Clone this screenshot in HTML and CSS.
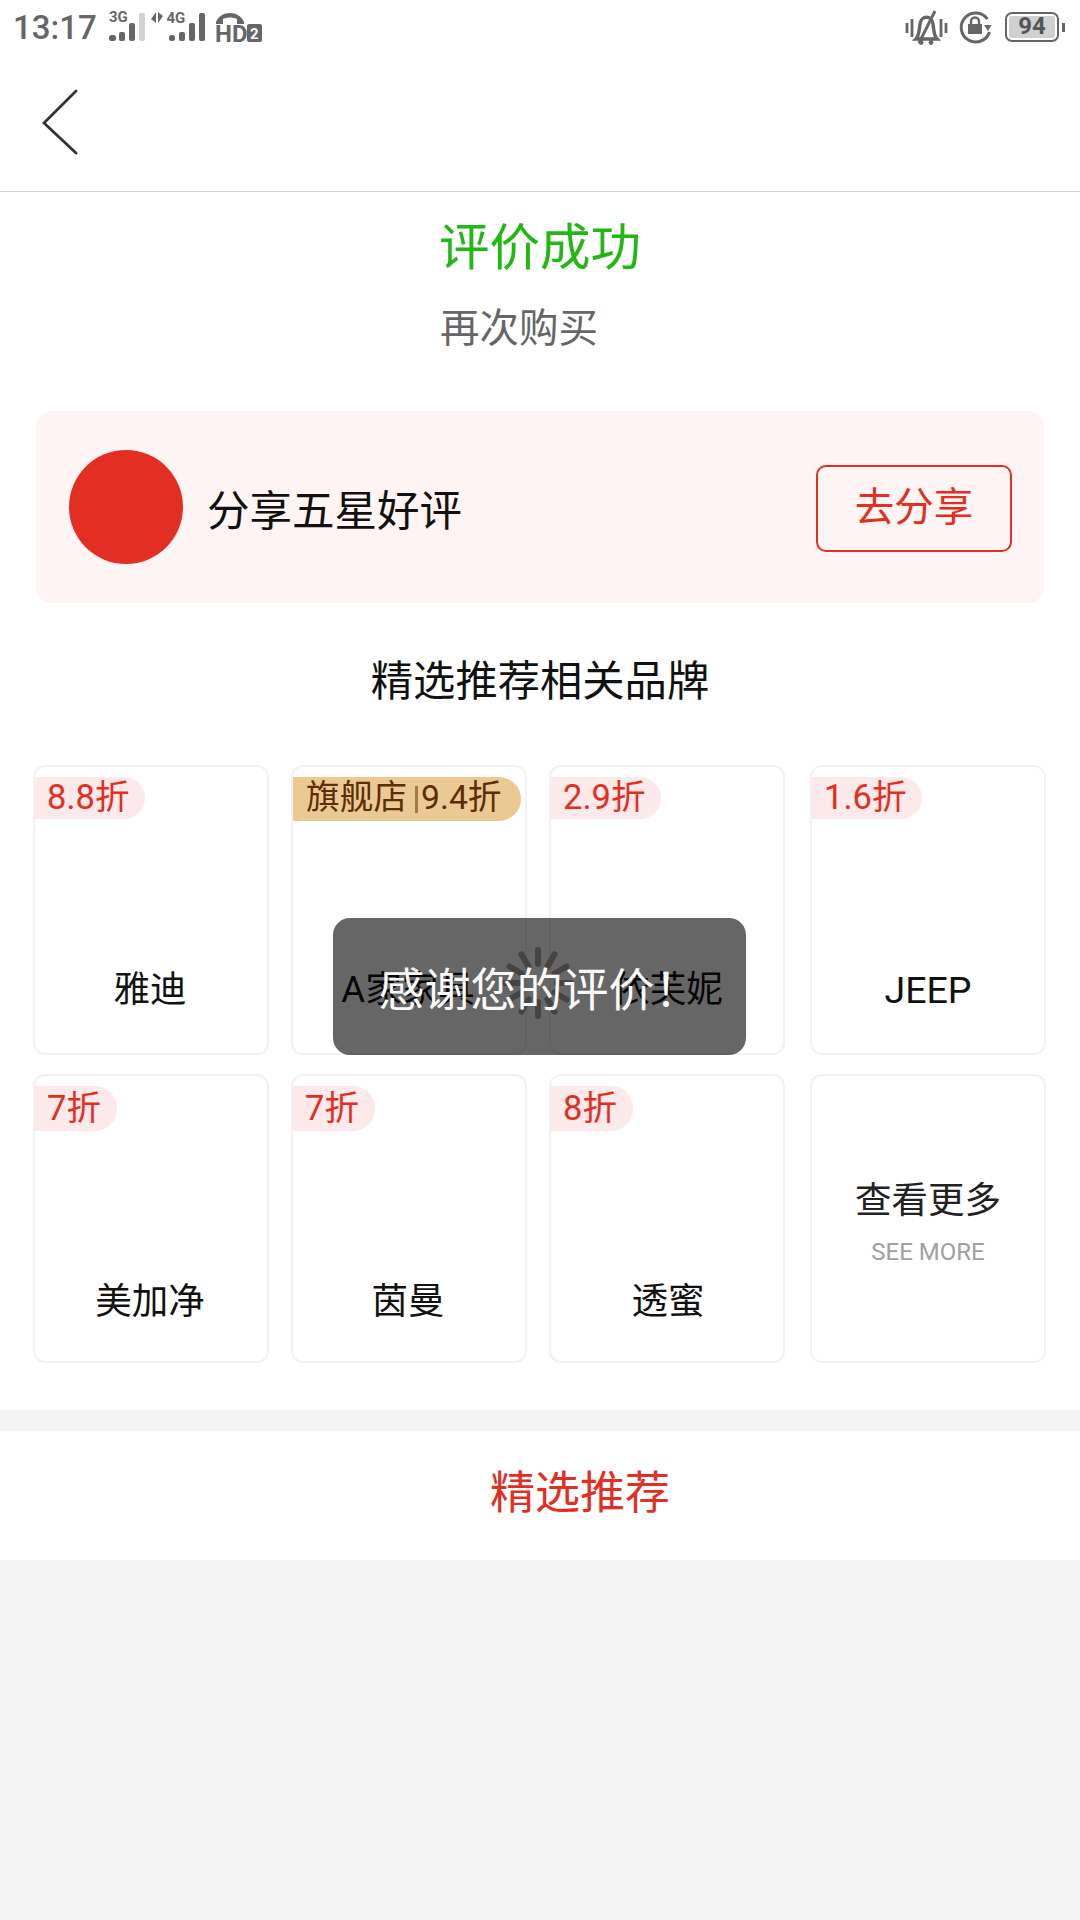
FILE: index.html
```html
<!DOCTYPE html>
<html lang="zh">
<head>
<meta charset="utf-8">
<title>评价成功</title>
<link rel="stylesheet" href="styles.css">
</head>
<body>
<div class="page">
  <div class="status">
    <div class="status-left">
      <span class="time">13:17</span>
      <svg class="ic ic-3g" width="37" height="30" viewBox="0 0 37 30"><text x="0" y="10" class="sig-t">3G</text><rect x="0" y="23" width="7" height="6" rx="2.500" fill="#666"/><rect x="10" y="20" width="6" height="9" rx="2" fill="#666"/><rect x="20" y="11" width="6" height="18" rx="2" fill="#666"/><rect x="30" y="1" width="6" height="28" rx="2" fill="#d2d2d2"/></svg>
      <svg class="ic ic-4g" width="56" height="30" viewBox="0 0 56 30"><path d="M6 0v11L1 7zM8 11V0l5 4z" fill="#666"/><text x="16.500" y="11" class="sig-t">4G</text><rect x="19" y="23" width="6" height="6" rx="2.500" fill="#666"/><rect x="29" y="20" width="6" height="9" rx="2" fill="#666"/><rect x="39" y="11" width="6" height="18" rx="2" fill="#666"/><rect x="49" y="1" width="6" height="28" rx="2" fill="#666"/></svg>
      <svg class="ic ic-hd" width="48" height="31" viewBox="0 0 48 31"><path d="M1 10C6 -2 24 -2 29 10v2h-7V7C17 5 13 5 8 7v5H1z" fill="#666"/><text x="0" y="30" class="hd-t">HD</text><rect x="32" y="12" width="15" height="18" rx="2" fill="#666"/><text x="35" y="27" class="hd-n">2</text></svg>
    </div>
    <div class="status-right">
      <svg class="ic" width="45" height="36" viewBox="0 0 45 36"><g fill="none" stroke="#666" stroke-width="2.800"><path d="M4 14v10M9 10v18M38 10v18M43 14v10"/><path d="M13 30c3-3 3-7 4-15c1-9 12-9 13 0c1 8 1 12 4 15z" stroke-width="3.400"/><path d="M16 34L32 2" stroke-width="3"/></g><circle cx="18" cy="33.500" r="2.400" fill="#666"/><circle cx="28" cy="33.500" r="2.400" fill="#666"/></svg>
      <svg class="ic" width="33" height="33" viewBox="0 0 33 33"><path d="M30.500 21A14.500 14.500 0 1 1 28.500 8" fill="none" stroke="#666" stroke-width="3"/><path d="M25 14l7.500 0-3.500 6z" fill="#666"/><rect x="9" y="13" width="14" height="10" fill="#666"/><path d="M12 13v-2.500a4 4 0 0 1 8 0v2.500" fill="none" stroke="#666" stroke-width="2.400"/></svg>
      <div class="battery"><div class="battery-body"><div class="battery-fill">94</div></div><div class="battery-cap"></div></div>
    </div>
  </div>
  <header class="nav">
    <svg width="44" height="70" viewBox="0 0 44 70"><path d="M34 3L2 35l32 30" fill="none" stroke="#333" stroke-width="2.800" stroke-linecap="round"/></svg>
  </header>
  <main class="content">
    <h1 class="title">评价成功</h1>
    <div class="rebuy">再次购买</div>
    <section class="share">
      <div class="share-dot"></div>
      <div class="share-text">分享五星好评</div>
      <div class="share-btn">去分享</div>
    </section>
    <h2 class="sub">精选推荐相关品牌</h2>
    <section class="grid">
      <div class="card"><span class="tag">8.8折</span><span class="name">雅迪</span></div>
      <div class="card"><span class="tag gold">旗舰店<i class="sep"></i>9.4折</span><span class="name">A家家具</span></div>
      <div class="card"><span class="tag">2.9折</span><span class="name">依芙妮</span></div>
      <div class="card"><span class="tag">1.6折</span><span class="name name-latin">JEEP</span></div>
      <div class="card"><span class="tag tall">7折</span><span class="name">美加净</span></div>
      <div class="card"><span class="tag tall">7折</span><span class="name">茵曼</span></div>
      <div class="card"><span class="tag tall">8折</span><span class="name">透蜜</span></div>
      <div class="card more"><span class="more-t">查看更多</span><span class="more-s">SEE MORE</span></div>
    </section>
    <div class="band"></div>
    <div class="picks"><span>精选推荐</span></div>
  </main>
  <div class="toast">
    <svg class="spin" width="72" height="72" viewBox="-36 -36 72 72"><g stroke="#444" stroke-width="6" stroke-linecap="round"><path d="M0 -33V-19"/><path d="M0 -33V-19" transform="rotate(30)"/><path d="M0 -33V-19" transform="rotate(60)"/><path d="M0 -33V-19" transform="rotate(90)"/><path d="M0 -33V-19" transform="rotate(120)"/><path d="M0 -33V-19" transform="rotate(150)"/><path d="M0 -33V-19" transform="rotate(180)"/><path d="M0 -33V-19" transform="rotate(210)"/><path d="M0 -33V-19" transform="rotate(240)"/><path d="M0 -33V-19" transform="rotate(270)"/><path d="M0 -33V-19" transform="rotate(300)"/><path d="M0 -33V-19" transform="rotate(330)"/></g></svg>
    <span class="toast-t">感谢您的评价！</span>
  </div>
</div>
</body>
</html>
```
FILE: styles.css
```css
* { box-sizing: border-box; }
html, body { margin: 0; padding: 0; }
body { width: 1080px; height: 1920px; overflow: hidden; background: #f3f3f3; font-family: "Roboto", "Noto Sans CJK SC", sans-serif; }
.page { position: relative; width: 1080px; height: 1920px; }
.status { height: 54px; background: #fff; display: flex; justify-content: space-between; align-items: center; padding: 0 15px 0 13px; }
.status-left, .status-right { display: flex; align-items: center; }
.time { flex: none; font-size: 33px; font-weight: 500; color: #666; white-space: nowrap; }
.ic { display: block; flex: none; overflow: visible; }
.ic-3g { margin-left: 12px; }
.ic-4g { margin-left: 4px; }
.ic-hd { margin-left: 9px; }
.sig-t { font: 700 15px "Roboto", sans-serif; fill: #666; }
.hd-t { font: 700 24px "Roboto", sans-serif; fill: #666; }
.hd-n { font: 700 15px "Roboto", sans-serif; fill: #fff; }
.status-right { gap: 11px; }
.battery { display: flex; align-items: center; gap: 3px; margin-left: 2px; }
.battery-body { width: 54px; height: 30px; border: 2.500px solid #666; border-radius: 7px; padding: 2px; }
.battery-fill { height: 100%; background: #d0d0d0; border-radius: 2px; font: 700 24px/21px "Roboto", sans-serif; color: #555; text-align: center; }
.battery-cap { width: 3px; height: 9px; background: #666; }
.nav { height: 138px; background: #fff; border-bottom: 1px solid #d4d4d4; display: flex; align-items: center; padding: 0 0 0 42px; }
.content { background: #fff; }
.title { margin: 0; padding-top: 20px; height: 92px; font-size: 50.500px; line-height: 72px; font-weight: 400; color: #22b812; text-align: center; }
.rebuy { height: 127px; padding: 17px 0 0 440px; font-size: 39.500px; line-height: 56px; color: #666; }
.share { width: 1008px; height: 192px; margin: 0 auto; background: #fdf4f3; border-radius: 16px; display: flex; align-items: center; padding: 0 32px 0 33px; }
.share-dot { width: 114px; height: 114px; border-radius: 50%; background: #e32e24; }
.share-text { flex: 1; margin-left: 24px; font-size: 42.500px; color: #111; }
.share-btn { width: 196px; height: 87px; margin-top: 3px; border: 2px solid #e32e24; border-radius: 10px; color: #e32e24; font-size: 39.500px; line-height: 81px; text-align: center; }
.sub { margin: 0; height: 162px; padding-top: 49px; font-size: 42.300px; line-height: 60px; font-weight: 400; color: #111; text-align: center; }
.grid { display: grid; grid-template-columns: 236px 236px 236px 239px; grid-template-rows: 290px 289px; column-gap: 22px; row-gap: 19px; padding-left: 33px; }
.card { position: relative; border: 2px solid #f2f2f2; border-radius: 12px; display: flex; flex-direction: column; align-items: center; justify-content: flex-end; padding: 0 2px 38px 0; }
.card:nth-child(3), .card:nth-child(7) { padding-right: 0; padding-left: 2px; }
.card:nth-child(4n) { width: 236px; justify-self: end; padding-right: 0; }
.card:nth-child(n+5) { padding-bottom: 34px; }
.tag { position: absolute; left: 0; top: 10px; height: 42px; padding: 0 16px 0 12px; background: #fce9e9; border-radius: 0 21px 21px 0; color: #e32e24; font-size: 34.500px; line-height: 40px; white-space: nowrap; }
.tag.tall { height: 45px; border-radius: 0 22px 22px 0; line-height: 44px; }
.tag.gold { height: 44px; border-radius: 0 22px 22px 0; background: #eaca92; color: #5e2d08; font-size: 33.700px; line-height: 42px; padding: 0 19px 0 13px; }
.sep { display: inline-block; width: 3px; height: 27px; background: #a57a4a; margin: 0 3px 0 8px; vertical-align: -4px; }
.name { font-size: 36.500px; line-height: 50px; color: #111; }
.name-latin { font-size: 37.500px; }
.card.more { justify-content: center; padding: 6px 0 0; }
.more-t { font-size: 36.500px; line-height: 50px; color: #222; }
.more-s { font-size: 24px; line-height: 32px; margin-top: 10px; color: #a0a0a0; }
.band { margin-top: 47px; height: 21px; background: #f3f3f3; }
.picks { height: 129px; background: #fff; display: flex; align-items: center; padding: 0 0 12px 490px; font-size: 45px; color: #e32e24; }
.toast { position: absolute; left: 333px; top: 918px; width: 413px; height: 137px; padding-bottom: 2px; border-radius: 17px; background: rgba(0,0,0,.6); display: flex; align-items: center; justify-content: center; }
.spin { position: absolute; left: 169px; top: 29px; }
.toast-t { position: relative; font-size: 46px; color: #f8f8f8; white-space: nowrap; }
```
